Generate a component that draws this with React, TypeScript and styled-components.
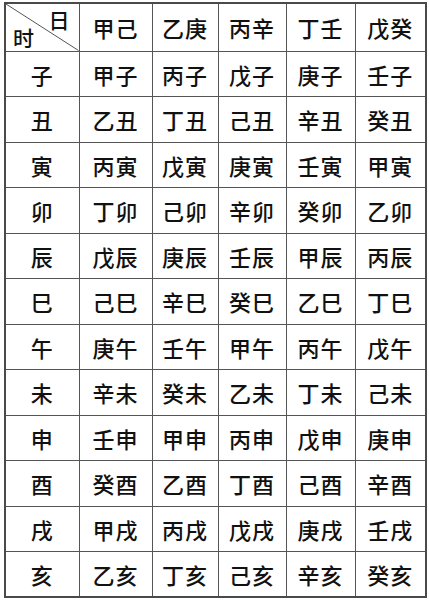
import React from 'react';
import styled, { createGlobalStyle } from 'styled-components';

const GlobalStyle = createGlobalStyle`
  html, body {
    margin: 0;
    padding: 0;
    background: #ffffff;
  }
  body {
    font-family: "Noto Sans CJK SC", "Noto Sans", sans-serif;
    color: #111111;
  }
`;

const Page = styled.div`
  padding: 2px 4px 0 4px;
`;

const Table = styled.table`
  border-collapse: collapse;
  table-layout: fixed;
  width: 421px;
  border: 2px solid #4a4a4a;
`;

const Row = styled.tr<{ $head?: boolean }>`
  height: ${(p) => (p.$head ? '48px' : '45.5px')};
`;

const Cell = styled.td`
  border: 1px solid #555555;
  padding: 0;
  text-align: center;
  vertical-align: middle;
  font-size: 22px;
  font-weight: 500;
  line-height: 1;
  letter-spacing: 1px;
`;

const CornerCell = styled(Cell)`
  position: relative;
`;

const Diagonal = styled.svg`
  position: absolute;
  inset: 0;
  width: 100%;
  height: 100%;
`;

const DayMark = styled.span`
  position: absolute;
  top: 5px;
  right: 8px;
  font-size: 21px;
`;

const HourMark = styled.span`
  position: absolute;
  left: 7px;
  bottom: 3px;
  font-size: 21px;
`;

const days = ['甲己', '乙庚', '丙辛', '丁壬', '戊癸'];

const rows: [string, string[]][] = [
  ['子', ['甲子', '丙子', '戊子', '庚子', '壬子']],
  ['丑', ['乙丑', '丁丑', '己丑', '辛丑', '癸丑']],
  ['寅', ['丙寅', '戊寅', '庚寅', '壬寅', '甲寅']],
  ['卯', ['丁卯', '己卯', '辛卯', '癸卯', '乙卯']],
  ['辰', ['戊辰', '庚辰', '壬辰', '甲辰', '丙辰']],
  ['巳', ['己巳', '辛巳', '癸巳', '乙巳', '丁巳']],
  ['午', ['庚午', '壬午', '甲午', '丙午', '戊午']],
  ['未', ['辛未', '癸未', '乙未', '丁未', '己未']],
  ['申', ['壬申', '甲申', '丙申', '戊申', '庚申']],
  ['酉', ['癸酉', '乙酉', '丁酉', '己酉', '辛酉']],
  ['戌', ['甲戌', '丙戌', '戊戌', '庚戌', '壬戌']],
  ['亥', ['乙亥', '丁亥', '己亥', '辛亥', '癸亥']],
];

const widths = [74, 73, 66, 68, 69, 71];

export default function App() {
  return (
    <Page>
      <GlobalStyle />
      <Table>
        <colgroup>
          {widths.map((w, i) => (
            <col key={i} style={{ width: w }} />
          ))}
        </colgroup>
        <tbody>
          <Row $head>
            <CornerCell>
              <Diagonal viewBox="0 0 100 100" preserveAspectRatio="none">
                <line
                  x1="0"
                  y1="0"
                  x2="100"
                  y2="100"
                  stroke="#555"
                  strokeWidth="1"
                  vectorEffect="non-scaling-stroke"
                />
              </Diagonal>
              <DayMark>日</DayMark>
              <HourMark>时</HourMark>
            </CornerCell>
            {days.map((d) => (
              <Cell key={d}>{d}</Cell>
            ))}
          </Row>
          {rows.map(([hour, cells]) => (
            <Row key={hour}>
              <Cell>{hour}</Cell>
              {cells.map((c) => (
                <Cell key={c}>{c}</Cell>
              ))}
            </Row>
          ))}
        </tbody>
      </Table>
    </Page>
  );
}
